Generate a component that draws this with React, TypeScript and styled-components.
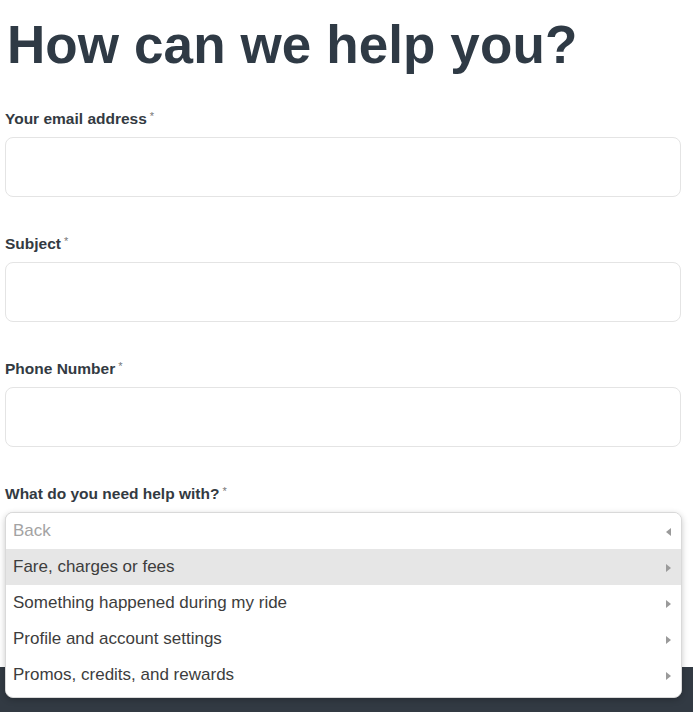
import styled, { createGlobalStyle } from "styled-components";

const GlobalStyle = createGlobalStyle`
  * { box-sizing: border-box; }
  body {
    margin: 0;
    background: #ffffff;
    font-family: "Liberation Sans", Arial, Helvetica, sans-serif;
  }
`;

const Page = styled.div`
  min-height: 100vh;
  display: flex;
  flex-direction: column;
  background: #fff;
`;

const Form = styled.form`
  display: flex;
  flex-direction: column;
  padding: 15px 12px 95px 5px;
`;

const Title = styled.h1`
  margin: 0 0 31px 2px;
  font-size: 53px;
  line-height: 60px;
  font-weight: 700;
  color: #2f3a45;
  letter-spacing: 0.1px;
`;

const Field = styled.div`
  display: flex;
  flex-direction: column;
  gap: 11px;
  margin-bottom: 34px;
  &:last-child { margin-bottom: 0; }
`;

const Label = styled.label`
  display: block;
  height: 20px;
  font-size: 15.5px;
  line-height: 20px;
  font-weight: 700;
  color: #333a42;
`;

const Req = styled.span`
  font-size: 11px;
  font-weight: 400;
  color: #777;
  margin-left: 3px;
  vertical-align: 4px;
`;

const Input = styled.input`
  display: block;
  width: 100%;
  height: 60px;
  margin: 0;
  padding: 0 14px;
  border: 1px solid #e4e4e4;
  border-radius: 8px;
  background: #fff;
  font: inherit;
  outline: none;
`;

const SelectAnchor = styled.div`
  position: relative;
  height: 60px;
  border: 1px solid #e4e4e4;
  border-radius: 8px;
`;

const Menu = styled.ul`
  position: absolute;
  top: -1px;
  left: -1px;
  right: -2px;
  margin: 0;
  padding: 0 0 4px;
  list-style: none;
  background: #fff;
  border: 1px solid #d9d9d9;
  border-radius: 8px;
  box-shadow: 0 2px 6px rgba(0, 0, 0, 0.22);
  overflow: hidden;
  z-index: 2;
`;

const Option = styled.li<{ $active?: boolean; $muted?: boolean }>`
  display: flex;
  align-items: center;
  justify-content: space-between;
  height: 36px;
  padding: 0 10px 0 7px;
  font-size: 17px;
  color: ${(p) => (p.$muted ? "#a3a3a3" : "#3d3d3d")};
  background: ${(p) => (p.$active ? "#e6e6e6" : "#fff")};
`;

const Arrow = styled.span<{ $left?: boolean }>`
  width: 0;
  height: 0;
  border-top: 4px solid transparent;
  border-bottom: 4px solid transparent;
  ${(p) =>
    p.$left
      ? "border-right: 5px solid #9a9a9a;"
      : "border-left: 5px solid #9a9a9a;"}
  margin-top: 2px;
`;

const Footer = styled.footer`
  flex: 1;
  min-height: 44px;
  background: #323a43;
`;

const fields = ["Your email address", "Subject", "Phone Number"];

const options = [
  "Fare, charges or fees",
  "Something happened during my ride",
  "Profile and account settings",
  "Promos, credits, and rewards",
];

export default function App() {
  return (
    <>
      <GlobalStyle />
      <Page>
        <Form onSubmit={(e) => e.preventDefault()}>
          <Title>How can we help you?</Title>
          {fields.map((f) => (
            <Field key={f}>
              <Label>
                {f}
                <Req>*</Req>
              </Label>
              <Input type="text" />
            </Field>
          ))}
          <Field>
            <Label>
              What do you need help with?
              <Req>*</Req>
            </Label>
            <SelectAnchor>
              <Menu>
                <Option $muted>
                  Back
                  <Arrow $left />
                </Option>
                {options.map((o, i) => (
                  <Option key={o} $active={i === 0}>
                    {o}
                    <Arrow />
                  </Option>
                ))}
              </Menu>
            </SelectAnchor>
          </Field>
        </Form>
        <Footer />
      </Page>
    </>
  );
}
